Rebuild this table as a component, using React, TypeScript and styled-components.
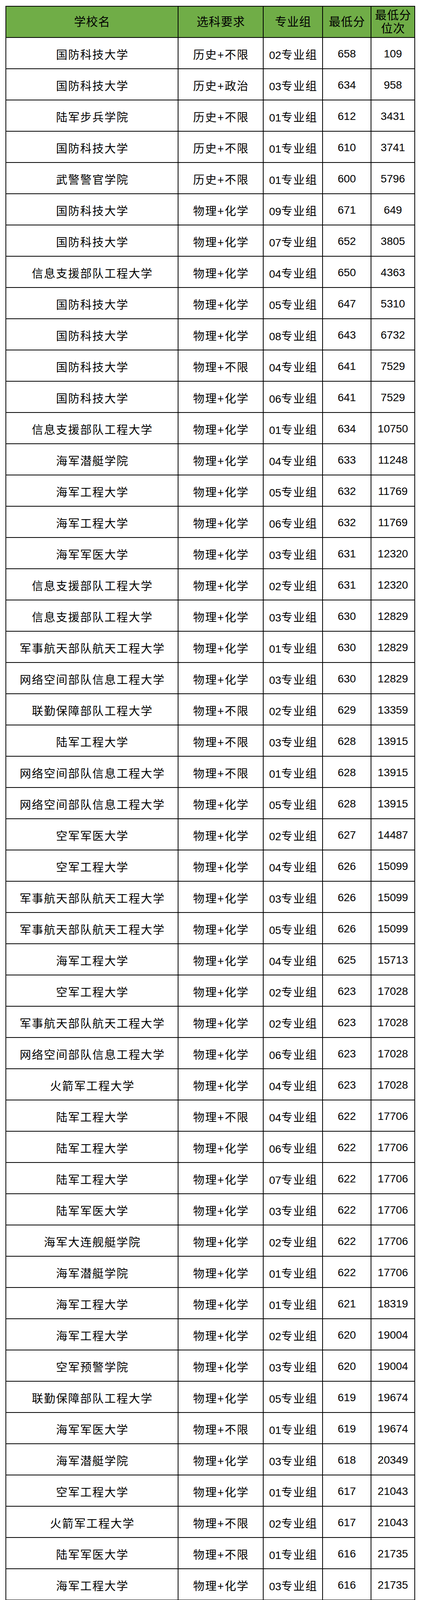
import React from 'react';
import styled, { createGlobalStyle } from 'styled-components';

const GlobalStyle = createGlobalStyle`
    html, body {
        margin: 0;
        padding: 0;
        background: #fff;
    }
    body {
        font-family: "Liberation Sans", "Noto Sans CJK SC", sans-serif;
        color: #000;
        overflow-x: hidden;
    }
`;

// 学校名 | 选科要求 | 专业组 | 最低分 | 最低分位次
const RAW = [
    '国防科技大学|历史+不限|02|658|109',
    '国防科技大学|历史+政治|03|634|958',
    '陆军步兵学院|历史+不限|01|612|3431',
    '国防科技大学|历史+不限|01|610|3741',
    '武警警官学院|历史+不限|01|600|5796',
    '国防科技大学|物理+化学|09|671|649',
    '国防科技大学|物理+化学|07|652|3805',
    '信息支援部队工程大学|物理+化学|04|650|4363',
    '国防科技大学|物理+化学|05|647|5310',
    '国防科技大学|物理+化学|08|643|6732',
    '国防科技大学|物理+不限|04|641|7529',
    '国防科技大学|物理+化学|06|641|7529',
    '信息支援部队工程大学|物理+化学|01|634|10750',
    '海军潜艇学院|物理+化学|04|633|11248',
    '海军工程大学|物理+化学|05|632|11769',
    '海军工程大学|物理+化学|06|632|11769',
    '海军军医大学|物理+化学|03|631|12320',
    '信息支援部队工程大学|物理+化学|02|631|12320',
    '信息支援部队工程大学|物理+化学|03|630|12829',
    '军事航天部队航天工程大学|物理+化学|01|630|12829',
    '网络空间部队信息工程大学|物理+化学|03|630|12829',
    '联勤保障部队工程大学|物理+不限|02|629|13359',
    '陆军工程大学|物理+不限|03|628|13915',
    '网络空间部队信息工程大学|物理+不限|01|628|13915',
    '网络空间部队信息工程大学|物理+化学|05|628|13915',
    '空军军医大学|物理+化学|02|627|14487',
    '空军工程大学|物理+化学|04|626|15099',
    '军事航天部队航天工程大学|物理+化学|03|626|15099',
    '军事航天部队航天工程大学|物理+化学|05|626|15099',
    '海军工程大学|物理+化学|04|625|15713',
    '空军工程大学|物理+化学|02|623|17028',
    '军事航天部队航天工程大学|物理+化学|02|623|17028',
    '网络空间部队信息工程大学|物理+化学|06|623|17028',
    '火箭军工程大学|物理+化学|04|623|17028',
    '陆军工程大学|物理+不限|04|622|17706',
    '陆军工程大学|物理+化学|06|622|17706',
    '陆军工程大学|物理+化学|07|622|17706',
    '陆军军医大学|物理+化学|03|622|17706',
    '海军大连舰艇学院|物理+化学|02|622|17706',
    '海军潜艇学院|物理+化学|01|622|17706',
    '海军工程大学|物理+化学|01|621|18319',
    '海军工程大学|物理+化学|02|620|19004',
    '空军预警学院|物理+化学|03|620|19004',
    '联勤保障部队工程大学|物理+化学|05|619|19674',
    '海军军医大学|物理+不限|01|619|19674',
    '海军潜艇学院|物理+化学|03|618|20349',
    '空军工程大学|物理+化学|01|617|21043',
    '火箭军工程大学|物理+不限|02|617|21043',
    '陆军军医大学|物理+不限|01|616|21735',
    '海军工程大学|物理+化学|03|616|21735',
    '网络空间部队信息工程大学|物理+化学|04|616|21735',
    '武警工程大学|物理+化学|05|616|21735',
    '海军军医大学|物理+化学|02|615|22495',
    '空军工程大学|物理+化学|03|615|22495',
    '海军航空大学|物理+不限|01|614|23214',
    '网络空间部队信息工程大学|物理+不限|02|614|23214',
    '武警工程大学|物理+不限|02|614|23214',
    '军事航天部队航天工程大学|物理+化学|04|613|23947',
    '陆军工程大学|物理+不限|01|612|24769',
    '陆军防化学院|物理+化学|02|612|24769',
    '海军航空大学|物理+化学|02|612|24769',
    '空军预警学院|物理+化学|01|610|26330',
    '陆军工程大学|物理+不限|02|609|27150',
    '陆军工程大学|物理+化学|05|607|28841',
    '陆军工程大学|物理+化学|08|607|28841',
    '联勤保障部队工程大学|物理+不限|01|607|28841',
    '联勤保障部队工程大学|物理+化学|03|607|28841',
    '联勤保障部队工程大学|物理+化学|04|607|28841',
    '火箭军工程大学|物理+不限|01|607|28841',
    '空军预警学院|物理+化学|02|606|29638',
    '火箭军工程大学|物理+化学|03|606|29638',
    '武警工程大学|物理+化学|04|606|29638',
    '海军大连舰艇学院|物理+化学|01|605|30492',
    '空军军医大学|物理+化学|01|602|33069',
    '陆军军医大学|物理+化学|02|601|33985',
    '陆军兵种大学|物理+不限|01|600|34888',
    '陆军兵种大学|物理+化学|04|600|34888',
    '陆军兵种大学|物理+不限|02|599|35803',
    '陆军兵种大学|物理+化学|05|598|36724',
    '武警工程大学|物理+不限|01|598|36724',
    '武警工程大学|物理+化学|03|598|36724',
    '陆军防化学院|物理+化学|01|597|37720',
    '武警警官学院|物理+化学|04|597|37720',
    '陆军步兵学院|物理+不限|02|596|38685',
    '武警警官学院|物理+不限|02|596|38685',
    '陆军步兵学院|物理+化学|04|595|39620',
    '陆军兵种大学|物理+不限|03|594|40639',
    '海军潜艇学院|物理+化学|02|594|40639',
    '武警警官学院|物理+不限|03|592|42525',
    '陆军步兵学院|物理+不限|03|591|43570',
    '空军工程大学|物理+化学|05|590|44618',
];

const ROWS = RAW.map((line) => {
    const [school, subjects, group, score, rank] = line.split('|');
    return { school, subjects, group, score, rank };
});

const HEADERS = ['学校名', '选科要求', '专业组', '最低分', '最低分位次'];

const Page = styled.div`
    width: 1078px;
    height: 7392px;
    box-sizing: border-box;
    padding: 15px 0 0 14px;
    background: #fff;
`;

const Grid = styled.div`
    display: grid;
    grid-template-columns: 439px 216px 150px 122px 110px;
    grid-auto-rows: 78px;
    gap: 2px;
    padding: 2px;
    width: max-content;
    background: #000;
`;

const HeaderCell = styled.div`
    display: flex;
    align-items: center;
    justify-content: center;
    padding: 0 4px 0 5px;
    background: #70ad47;
    font-size: 30px;
    line-height: 1.15;
    letter-spacing: 1px;
    text-align: center;
`;

const Cell = styled.div<{ $numeric?: boolean }>`
    display: flex;
    align-items: center;
    justify-content: center;
    padding-left: ${(p) => (p.$numeric ? '0' : '2px')};
    padding-top: 4px;
    box-sizing: border-box;
    background: #fff;
    font-size: ${(p) => (p.$numeric ? '28px' : '29px')};
    letter-spacing: ${(p) => (p.$numeric ? '0' : '2px')};
    white-space: nowrap;
`;

const Code = styled.span`
    font-size: 28px;
    letter-spacing: 0;
`;

export default function App(): React.ReactElement {
    return (
        <>
            <GlobalStyle />
            <Page>
                <Grid>
                    {HEADERS.map((h) => (
                        <HeaderCell key={h}>{h}</HeaderCell>
                    ))}
                    {ROWS.map((r, i) => (
                        <React.Fragment key={i}>
                            <Cell>{r.school}</Cell>
                            <Cell>{r.subjects}</Cell>
                            <Cell>
                                <span>
                                    <Code>{r.group}</Code>专业组
                                </span>
                            </Cell>
                            <Cell $numeric>{r.score}</Cell>
                            <Cell $numeric>{r.rank}</Cell>
                        </React.Fragment>
                    ))}
                </Grid>
            </Page>
        </>
    );
}
